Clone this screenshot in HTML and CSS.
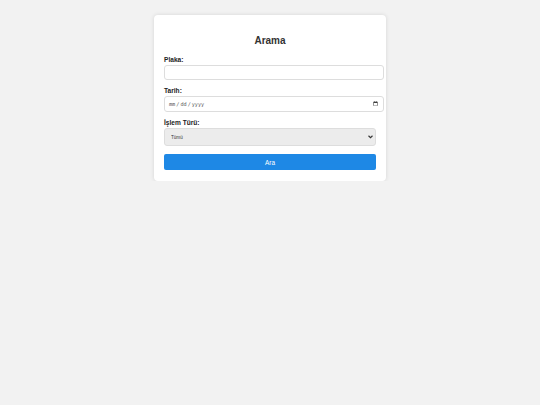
FILE: index.html
```html
<!DOCTYPE html>
<html lang="tr">
<head>
<meta charset="utf-8">
<title>Arama</title>
<link rel="stylesheet" href="styles.css">
</head>
<body>
<div class="page">
  <form class="card">
    <h2 class="title">Arama</h2>
    <label class="label" for="plaka">Plaka:</label>
    <input class="field" type="text" id="plaka">
    <label class="label" for="tarih">Tarih:</label>
    <input class="field date" type="date" id="tarih">
    <label class="label" for="tur">İşlem Türü:</label>
    <div class="select-wrap">
      <select class="select" id="tur">
        <option>Tümü</option>
      </select>
      <svg class="chevron" width="5" height="4" viewBox="0 0 10 8" aria-hidden="true"><path d="M1 1.5 L5 5.5 L9 1.5" fill="none" stroke="#333" stroke-width="2.2"/></svg>
    </div>
    <button class="btn" type="button">Ara</button>
  </form>
</div>
</body>
</html>
```
FILE: styles.css
```css
html, body {
  margin: 0;
  padding: 0;
  background: #f2f2f2;
  font-family: "Liberation Sans", Arial, sans-serif;
}
.page {
  display: flex;
  justify-content: center;
  padding-top: 15px;
}
.card {
  width: 212px;
  padding: 10px 10px 11px;
  background: #fff;
  border-radius: 4px;
  box-shadow: 0 0 4px rgba(0, 0, 0, 0.12);
}
.title {
  margin: 10px 0 9px;
  font-size: 10px;
  line-height: 12px;
  font-weight: bold;
  color: #333;
  text-align: center;
}
.label {
  display: block;
  font-size: 6.6px;
  line-height: 8px;
  font-weight: bold;
  color: #222;
  margin-bottom: 1px;
}
.field {
  display: block;
  box-sizing: border-box;
  width: calc(100% + 8px);
  height: 15px;
  margin: 0 0 7px;
  padding: 0 3px;
  border: 1px solid #ddd;
  border-radius: 3px;
  background: #fff;
  font-family: "DejaVu Sans Mono", monospace;
  font-size: 5.2px;
  color: #555;
}
.date {
  height: 16px;
}
.select-wrap {
  position: relative;
  margin: 1px 0 8px;
}
.select {
  display: block;
  box-sizing: border-box;
  width: 100%;
  height: 18px;
  padding: 0 6px;
  border: 1px solid #ddd;
  border-radius: 3px;
  background: #ececec;
  -webkit-appearance: none;
  appearance: none;
  font-family: "Liberation Sans", Arial, sans-serif;
  font-size: 4.6px;
  color: #333;
}
.chevron {
  position: absolute;
  right: 3px;
  top: 7px;
  pointer-events: none;
}
.btn {
  display: block;
  width: 100%;
  height: 16px;
  padding: 0;
  border: none;
  border-radius: 2px;
  background: #1e88e5;
  color: #fff;
  font-family: "Liberation Sans", Arial, sans-serif;
  font-size: 6.4px;
}
```
